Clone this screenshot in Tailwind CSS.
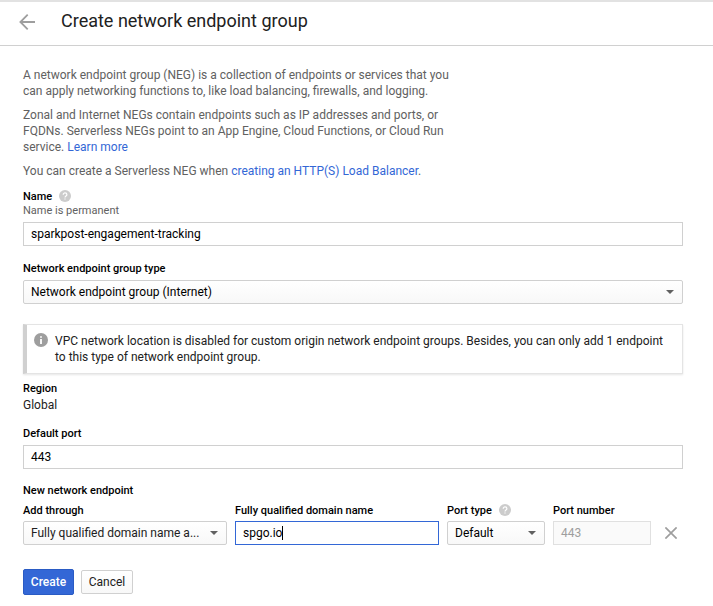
<!DOCTYPE html>
<html lang="en">
<head>
<meta charset="utf-8">
<title>Create network endpoint group</title>
<script src="https://cdn.jsdelivr.net/npm/@tailwindcss/browser@4"></script>
</head>
<body class="h-[606px] w-[713px] overflow-hidden bg-white font-['Roboto',sans-serif] text-[12px] leading-4 text-[#212121]">
<header class="flex h-[46px] items-center border-t-2 border-b border-t-[#e2e2e2] border-b-[#d0d0d0] pb-1 pl-[19px]">
  <svg class="h-4 w-4 shrink-0" viewBox="0 0 16 16" fill="none" stroke="#9e9e9e" stroke-width="1.8"><path d="M16 8H1.8M8.7 .7 1.4 8l7.3 7.3"/></svg>
  <h1 class="ml-[26px] pb-[2px] text-[18px] leading-6">Create network endpoint group</h1>
</header>
<main class="w-[683px] pt-[21px] pl-[23px]">
  <section class="flex flex-col gap-2 whitespace-nowrap text-[#616161]">
    <p>A network endpoint group (NEG) is a collection of endpoints or services that you<br>can apply networking functions to, like load balancing, firewalls, and logging.</p>
    <p>Zonal and Internet NEGs contain endpoints such as IP addresses and ports, or<br>FQDNs. Serverless NEGs point to an App Engine, Cloud Functions, or Cloud Run<br>service. <a class="text-[#3367d6]">Learn more</a></p>
    <p>You can create a Serverless NEG when <a class="text-[#3367d6]">creating an HTTP(S) Load Balancer</a>.</p>
  </section>
  <div class="mt-[10px] flex h-[14px] items-center gap-[7px] text-[11px] leading-[14px] font-medium text-black"><span class="pt-[2px]">Name</span>
    <svg class="h-3 w-3 shrink-0" viewBox="0 0 12 12"><circle cx="6" cy="6" r="6" fill="#ccc"/><path d="M4.2 4.8C4.2 2.3 7.9 2.4 7.9 4.7 7.9 6 6 6 6 7.5" fill="none" stroke="#fff" stroke-width="1.2"/><path d="M5.4 8.4h1.2v1.2H5.4z" fill="#fff"/></svg>
  </div>
  <div class="mt-px h-[14px] text-[11px] leading-[14px] text-[#616161]">Name is permanent</div>
  <div class="mt-1 flex h-6 items-center border border-[#d0d0d0] px-[7px] text-black">sparkpost-engagement-tracking</div>
  <div class="mt-4 h-[14px] text-[11px] leading-[14px] font-medium text-black">Network endpoint group type</div>
  <div class="mt-1 flex h-6 items-center justify-between rounded-[2px] border border-[#d0d0d0] bg-linear-to-b from-white to-[#f8f8f8] pr-2 pl-[7px] text-black">Network endpoint group (Internet)
    <svg class="h-1 w-2 shrink-0" viewBox="0 0 8 4"><path d="M0 0h8L4 4z" fill="#616161"/></svg>
  </div>
  <div class="mt-5 flex h-[50px] gap-[7px] border border-l-4 border-[#e4e4e4] border-l-[#d0d0d0] pt-2 pl-[7px] whitespace-nowrap shadow-[0_1px_2px_rgba(0,0,0,0.1)]">
    <svg class="h-[14px] w-[14px] shrink-0" viewBox="0 0 14 14"><circle cx="7" cy="7" r="7" fill="#9e9e9e"/><path d="M6.1 3.3h1.8v1.5H6.1zM6.1 6h1.8v4.9H6.1z" fill="#fff"/></svg>
    <p>VPC network location is disabled for custom origin network endpoint groups. Besides, you can only add 1 endpoint<br>to this type of network endpoint group.</p>
  </div>
  <div class="mt-2 h-[14px] text-[11px] leading-[14px] font-medium text-black">Region</div>
  <div class="mt-px">Global</div>
  <div class="mt-[14px] h-[14px] text-[11px] leading-[14px] font-medium text-black">Default port</div>
  <div class="mt-1 flex h-6 items-center border border-[#d0d0d0] px-[7px] text-black">443</div>
  <div class="mt-[15px] h-[14px] text-[11px] leading-[14px] font-medium text-black">New network endpoint</div>
  <div class="mt-[6px] grid w-[660px] grid-cols-[204px_204px_98px_98px_24px] gap-x-2 gap-y-[3px] whitespace-nowrap">
    <div class="h-[14px] text-[11px] leading-[14px] font-medium text-black">Add through</div>
    <div class="h-[14px] text-[11px] leading-[14px] font-medium text-black">Fully qualified domain name</div>
    <div class="flex h-[14px] gap-[7px] text-[11px] leading-[14px] font-medium text-black">Port type
      <svg class="h-3 w-3 shrink-0" viewBox="0 0 12 12"><circle cx="6" cy="6" r="6" fill="#ccc"/><path d="M4.2 4.8C4.2 2.3 7.9 2.4 7.9 4.7 7.9 6 6 6 6 7.5" fill="none" stroke="#fff" stroke-width="1.2"/><path d="M5.4 8.4h1.2v1.2H5.4z" fill="#fff"/></svg>
    </div>
    <div class="h-[14px] text-[11px] leading-[14px] font-medium text-black">Port number</div>
    <div></div>
    <div class="flex h-6 items-center justify-between rounded-[2px] border border-[#d0d0d0] bg-linear-to-b from-white to-[#f8f8f8] pr-2 pl-[7px]">Fully qualified domain name a...
      <svg class="h-1 w-2 shrink-0" viewBox="0 0 8 4"><path d="M0 0h8L4 4z" fill="#616161"/></svg>
    </div>
    <div class="flex h-6 items-center border border-[#3367d6] pl-[7px] text-black">spgo.io<span class="h-[14px] w-px bg-black"></span></div>
    <div class="flex h-6 items-center justify-between rounded-[2px] border border-[#d0d0d0] bg-linear-to-b from-white to-[#f8f8f8] pr-2 pl-[7px] text-black">Default
      <svg class="h-1 w-2 shrink-0" viewBox="0 0 8 4"><path d="M0 0h8L4 4z" fill="#616161"/></svg>
    </div>
    <div class="flex h-6 items-center border border-[#e0e0e0] bg-[#fafafa] pl-[7px] text-[#9e9e9e]">443</div>
    <div class="flex items-center justify-center"><svg class="h-3 w-3" viewBox="0 0 12 12" fill="none" stroke="#9e9e9e" stroke-width="1.7"><path d="M.4.4l11.2 11.2M11.6.4.4 11.6"/></svg></div>
  </div>
  <div class="mt-6 flex items-center gap-[7px]">
    <button class="h-[26px] w-[51px] rounded-[2px] border border-[#2a5bc4] bg-[#3367d6] font-medium text-white">Create</button>
    <button class="h-6 w-[52px] rounded-[2px] border border-[#d0d0d0] bg-linear-to-b from-white to-[#f8f8f8]">Cancel</button>
  </div>
</main>
</body>
</html>
